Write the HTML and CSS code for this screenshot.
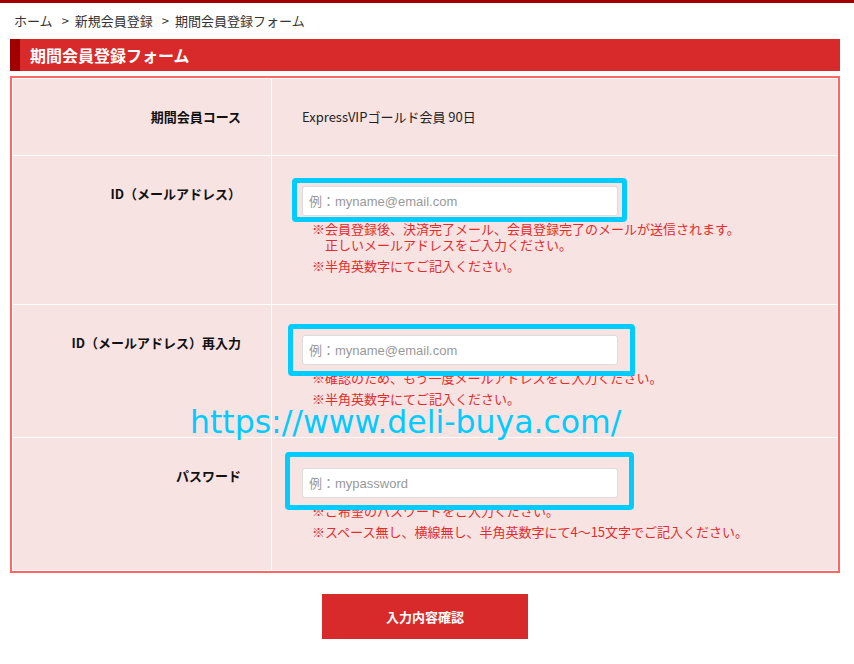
FILE: index.html
```html
<!DOCTYPE html>
<html lang="ja">
<head>
<meta charset="utf-8">
<title>期間会員登録フォーム</title>
<link rel="stylesheet" href="styles.css">
</head>
<body>
<div class="topbar"></div>
<div class="page">
  <ol class="crumbs">
    <li>ホーム</li>
    <li>新規会員登録</li>
    <li>期間会員登録フォーム</li>
  </ol>
  <h1 class="title">期間会員登録フォーム</h1>
  <table class="form">
    <tr class="row-course">
      <th>期間会員コース</th>
      <td>ExpressVIPゴールド会員 90日</td>
    </tr>
    <tr>
      <th>ID（メールアドレス）</th>
      <td>
        <div class="field">
          <input class="text-input" type="text" placeholder="例：myname@email.com">
          <p class="note">※会員登録後、決済完了メール、会員登録完了のメールが送信されます。<br>正しいメールアドレスをご入力ください。</p>
          <p class="note">※半角英数字にてご記入ください。</p>
          <span class="mark mark-1"></span>
        </div>
      </td>
    </tr>
    <tr>
      <th>ID（メールアドレス）再入力</th>
      <td>
        <div class="field">
          <input class="text-input" type="text" placeholder="例：myname@email.com">
          <p class="note">※確認のため、もう一度メールアドレスをご入力ください。</p>
          <p class="note">※半角英数字にてご記入ください。</p>
          <span class="mark mark-2"></span>
        </div>
      </td>
    </tr>
    <tr>
      <th>パスワード</th>
      <td>
        <div class="field">
          <input class="text-input" type="text" placeholder="例：mypassword">
          <p class="note">※ご希望のパスワードをご入力ください。</p>
          <p class="note">※スペース無し、横線無し、半角英数字にて4～15文字でご記入ください。</p>
          <span class="mark mark-3"></span>
        </div>
      </td>
    </tr>
  </table>
  <div class="actions">
    <button class="submit" type="button">入力内容確認</button>
  </div>
  <div class="watermark">https://www.deli-buya.com/</div>
</div>
</body>
</html>
```
FILE: styles.css
```css
* { box-sizing: border-box; }

html, body {
  margin: 0;
  padding: 0;
  background: #fff;
}

body {
  font-family: "Noto Sans CJK JP", "Noto Sans", sans-serif;
  color: #222;
  font-size: 13px;
}

.topbar {
  height: 3px;
  background: #a00000;
}

.page {
  position: relative;
  padding: 0 14px 0 10px;
}

.crumbs {
  list-style: none;
  margin: 9px 0 0;
  padding: 0 0 0 4px;
  display: flex;
  font-size: 13px;
  line-height: 18px;
  color: #333;
}

.crumbs li + li::before {
  content: ">";
  margin: 0 6px 0 9px;
}

.title {
  margin: 9px 0 0;
  height: 32px;
  background: #d82a2a;
  border-left: 10px solid #a00000;
  padding-left: 10px;
  color: #fff;
  font-size: 16px;
  font-weight: bold;
  line-height: 32px;
}

.form {
  margin-top: 5px;
  width: 830px;
  border: 2px solid #ff6666;
  border-spacing: 1px;
  background: #fff;
}

.form th,
.form td {
  background: #f8e3e3;
  vertical-align: top;
  line-height: 16px;
  font-size: 13px;
}

.form th {
  width: 258px;
  padding: 30px 30px 30px 0;
  text-align: right;
  font-weight: bold;
  color: #111;
}

.form td {
  padding: 30px;
}

.field {
  position: relative;
}

.text-input {
  display: block;
  width: 316px;
  height: 30px;
  margin: 0;
  padding: 0 6px;
  border: 1px solid #dcdcdc;
  border-radius: 3px;
  background: #fff;
  font-family: "Liberation Sans", "Noto Sans CJK JP", sans-serif;
  font-size: 13px;
  color: #333;
  outline: none;
}

.text-input::placeholder {
  color: #999;
}

.note {
  margin: 5px 0 0 10px;
  padding-left: 13px;
  text-indent: -13px;
  color: #e22c2c;
  font-size: 13px;
  line-height: 16px;
}

.mark {
  position: absolute;
  border: 5px solid #00ccff;
  border-radius: 4px;
  pointer-events: none;
}

.mark-1 { left: -10px; top: -8px; width: 335px; height: 44px; }
.mark-2 { left: -14px; top: -11px; width: 347px; height: 52px; }
.mark-3 { left: -17px; top: -16px; width: 349px; height: 58px; }

.actions {
  display: flex;
  justify-content: center;
  margin-top: 21px;
  width: 830px;
}

.submit {
  width: 206px;
  height: 45px;
  border: none;
  background: #d82a2a;
  color: #fff;
  font-family: "Noto Sans CJK JP", sans-serif;
  font-size: 13px;
  font-weight: bold;
  cursor: pointer;
}

.watermark {
  position: absolute;
  left: 190px;
  top: 394px;
  font-family: "DejaVu Sans", sans-serif;
  font-size: 31.5px;
  line-height: 32px;
  color: #00ccff;
  white-space: nowrap;
}
```
